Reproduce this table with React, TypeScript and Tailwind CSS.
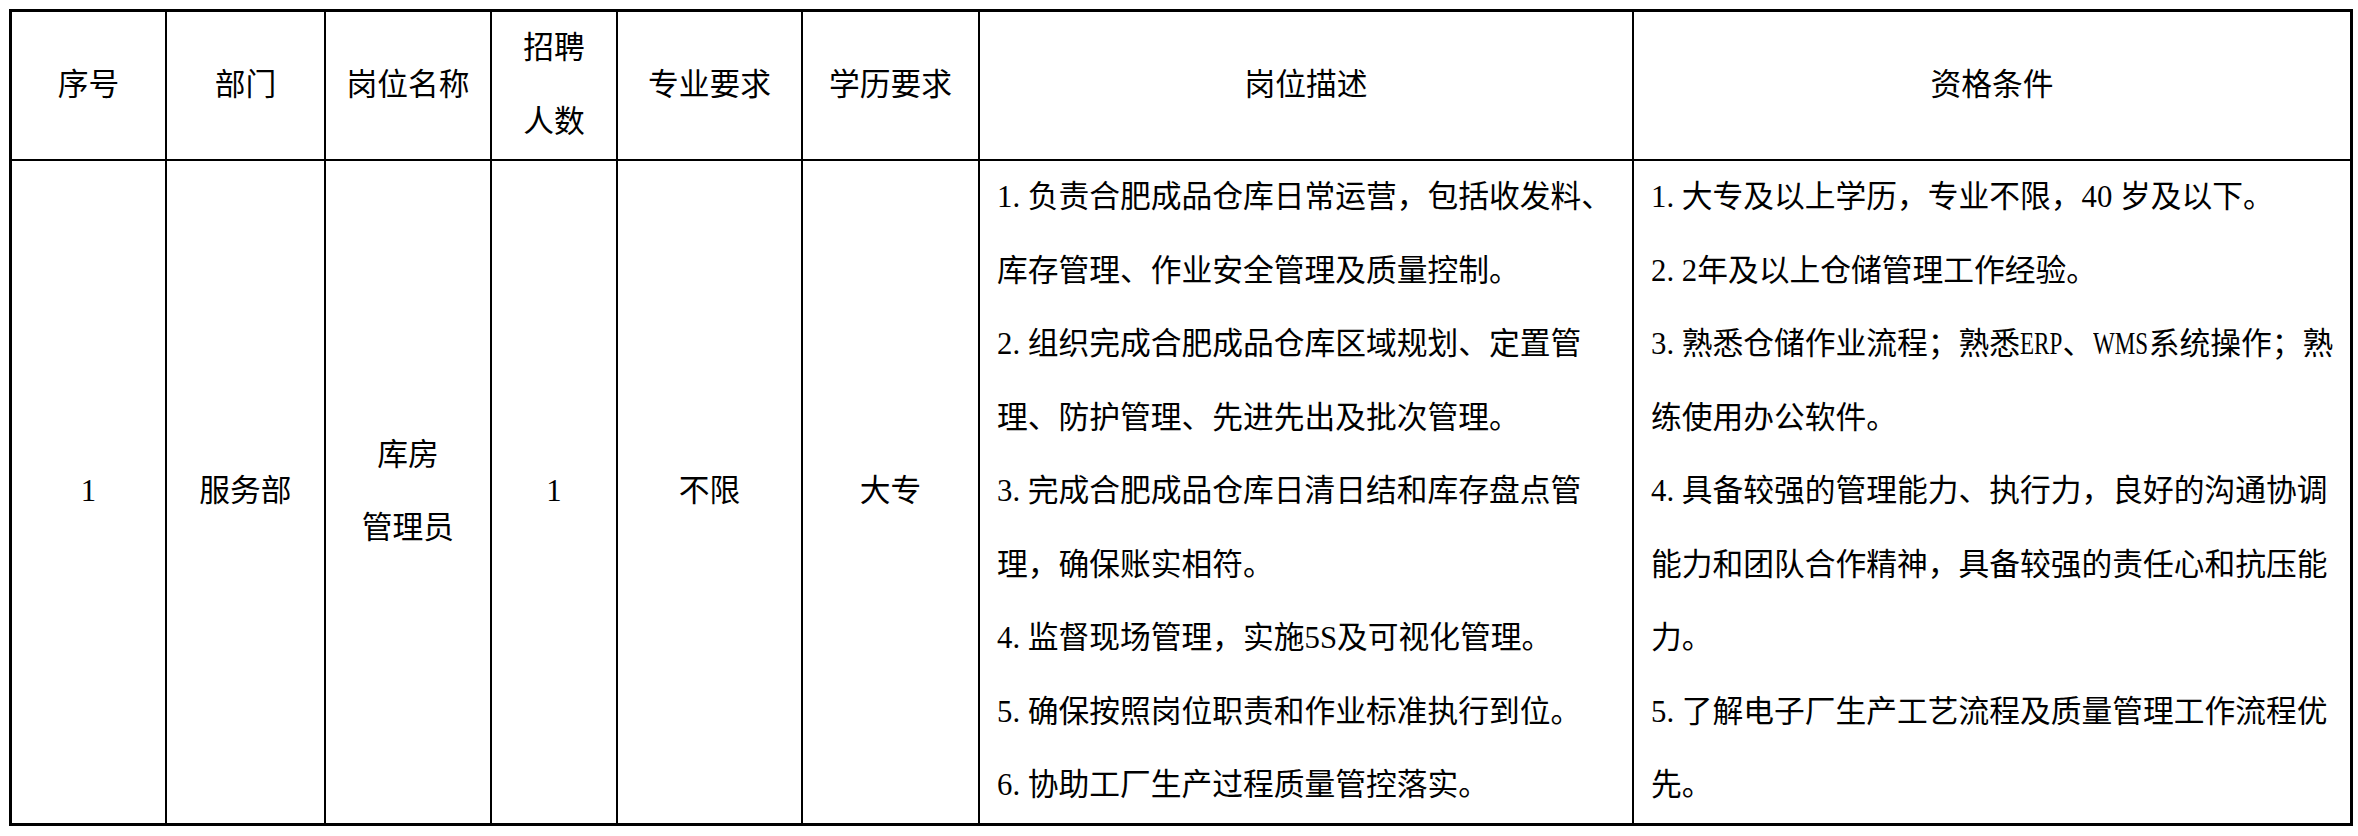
import React from "react";

// one row job posting table, line breaks kept as in the printed sheet
type Line = [string, React.ReactNode];

// SimSun latin is narrow, so squeeze the serif capitals a bit
const Narrow: React.FC<{ children: string; mr: string }> = ({ children, mr }) => (
  <span className={`inline-block origin-left scale-x-[0.75] ${mr}`}>{children}</span>
);

const duties: Line[] = [
  ["1.", "负责合肥成品仓库日常运营，包括收发料、"],
  ["", "库存管理、作业安全管理及质量控制。"],
  ["2.", "组织完成合肥成品仓库区域规划、定置管"],
  ["", "理、防护管理、先进先出及批次管理。"],
  ["3.", "完成合肥成品仓库日清日结和库存盘点管"],
  ["", "理，确保账实相符。"],
  ["4.", "监督现场管理，实施5S及可视化管理。"],
  ["5.", "确保按照岗位职责和作业标准执行到位。"],
  ["6.", "协助工厂生产过程质量管控落实。"],
];

const requirements: Line[] = [
  ["1.", "大专及以上学历，专业不限，40 岁及以下。"],
  ["2.", "2年及以上仓储管理工作经验。"],
  [
    "3.",
    <>
      熟悉仓储作业流程；熟悉<Narrow mr="-mr-[14px]">ERP</Narrow>、
      <Narrow mr="-mr-[18px]">WMS</Narrow>系统操作；熟
    </>,
  ],
  ["", "练使用办公软件。"],
  ["4.", "具备较强的管理能力、执行力，良好的沟通协调"],
  ["", "能力和团队合作精神，具备较强的责任心和抗压能"],
  ["", "力。"],
  ["5.", "了解电子厂生产工艺流程及质量管理工作流程优"],
  ["", "先。"],
];

const Cell: React.FC<{ children: React.ReactNode }> = ({ children }) => (
  <div className="flex items-center justify-center bg-white text-center">
    <div>{children}</div>
  </div>
);

const TextBlock: React.FC<{ lines: Line[] }> = ({ lines }) => (
  <div className="flex flex-col justify-center bg-white pl-[17px]">
    {lines.map(([num, text], i) => (
      <div key={i} className="whitespace-nowrap">
        {num && <span className="inline-block w-[1em]">{num}</span>}
        {text}
      </div>
    ))}
  </div>
);

export default function App() {
  return (
    <div className="min-h-screen bg-white p-[9px]">
      <div className="grid w-[2344px] grid-cols-[153px_157px_164px_124px_183px_175px_652px_716px] grid-rows-[147px_662px] gap-[2px] border-[3px] border-black bg-black font-['Liberation_Serif','Noto_Sans_CJK_SC',serif] text-[30.75px] leading-[73.5px] text-black">
        {/* header */}
        <Cell>序号</Cell>
        <Cell>部门</Cell>
        <Cell>岗位名称</Cell>
        <Cell>
          <div>招聘</div>
          <div>人数</div>
        </Cell>
        <Cell>专业要求</Cell>
        <Cell>学历要求</Cell>
        <Cell>岗位描述</Cell>
        <Cell>资格条件</Cell>

        {/* body */}
        <Cell>1</Cell>
        <Cell>服务部</Cell>
        <Cell>
          <div>库房</div>
          <div>管理员</div>
        </Cell>
        <Cell>1</Cell>
        <Cell>不限</Cell>
        <Cell>大专</Cell>
        <TextBlock lines={duties} />
        <TextBlock lines={requirements} />
      </div>
    </div>
  );
}
